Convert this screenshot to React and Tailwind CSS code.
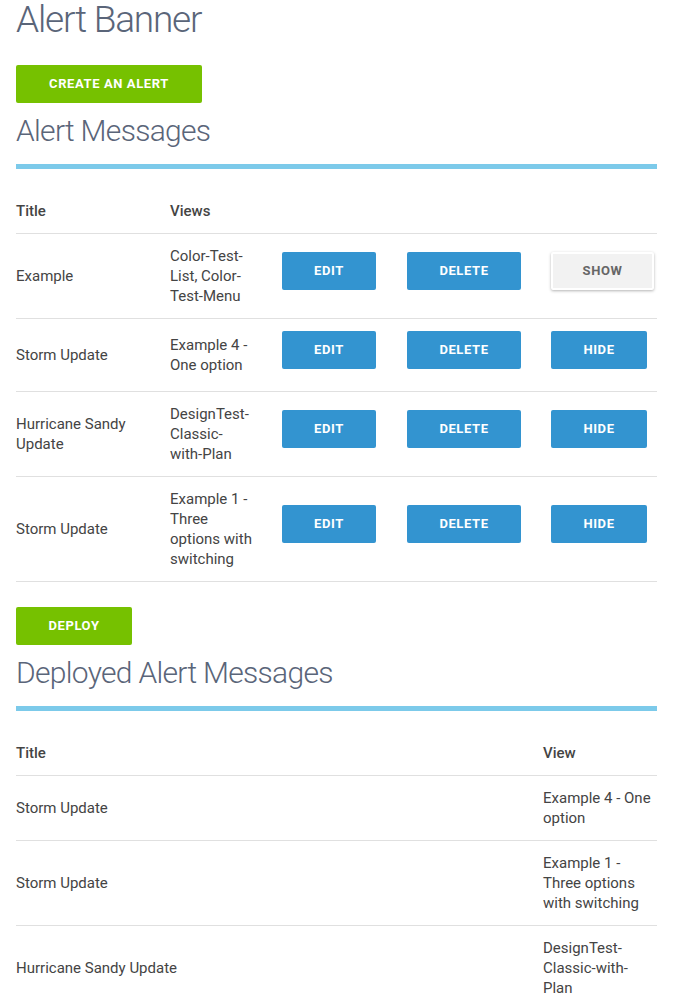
const alerts = [
  { title: 'Example', views: 'Color-Test-List, Color-Test-Menu', shown: false },
  { title: 'Storm Update', views: 'Example 4 - One option', shown: true },
  { title: 'Hurricane Sandy Update', views: 'DesignTest-Classic-with-Plan', shown: true },
  { title: 'Storm Update', views: 'Example 1 - Three options with switching', shown: true },
]

const deployed = [
  { title: 'Storm Update', view: 'Example 4 - One option' },
  { title: 'Storm Update', view: 'Example 1 - Three options with switching' },
  { title: 'Hurricane Sandy Update', view: 'DesignTest-Classic-with-Plan' },
]

const GreenButton = ({ children, className }) => (
  <button
    className={`h-[38px] rounded-[2px] bg-[#76c100] text-[13px] font-bold uppercase tracking-[0.6px] text-white ${className}`}
  >
    {children}
  </button>
)

const BlueButton = ({ children, className }) => (
  <button
    className={`mb-[10px] h-[38px] rounded-[2px] bg-[#3394d0] text-[13px] font-bold uppercase tracking-[0.6px] text-white ${className}`}
  >
    {children}
  </button>
)

const SectionTitle = ({ children }) => (
  <div>
    <h2 className="text-[30px] font-light leading-[36px] tracking-[-0.7px] text-[#5a6579]">{children}</h2>
    <div className="mt-[15px] h-[5px] bg-[#7ccaea]" />
  </div>
)

export default function App() {
  return (
    <div
      className="w-[673px] bg-white px-4 text-[15px] leading-5 text-[#444]"
      style={{ fontFamily: 'Roboto, "Liberation Sans", sans-serif' }}
    >
      <h1 className="text-[37px] font-light leading-10 tracking-[-1.2px] text-[#5a6579]">Alert Banner</h1>

      <GreenButton className="mt-[25px] w-[186px]">Create an alert</GreenButton>

      <div className="mt-[10px]">
        <SectionTitle>Alert Messages</SectionTitle>
      </div>

      {/* Alert messages table */}
      <div className="mt-5">
        <div className="grid h-[45px] grid-cols-[154px_1fr] items-center border-b border-[#e0e0e0] font-medium">
          <div>Title</div>
          <div>Views</div>
        </div>
        {alerts.map((a, i) => (
          <div
            key={i}
            className="grid grid-cols-[154px_112px_125px_144px_1fr] items-center border-b border-[#e0e0e0] py-3"
          >
            <div className="pr-3">{a.title}</div>
            <div className="w-[84px]">{a.views}</div>
            <div>
              <BlueButton className="w-[94px]">Edit</BlueButton>
            </div>
            <div>
              <BlueButton className="w-[114px]">Delete</BlueButton>
            </div>
            <div>
              {a.shown ? (
                <BlueButton className="w-[96px]">Hide</BlueButton>
              ) : (
                <button className="mb-[10px] h-[38px] w-[103px] rounded-[2px] border-2 border-white bg-[#f2f2f2] text-[13px] font-bold uppercase tracking-[0.6px] text-[#666] shadow-[0_1px_3px_rgba(0,0,0,0.3)]">
                  Show
                </button>
              )}
            </div>
          </div>
        ))}
      </div>

      <GreenButton className="mt-[25px] w-[116px]">Deploy</GreenButton>

      <div className="mt-[10px]">
        <SectionTitle>Deployed Alert Messages</SectionTitle>
      </div>

      {/* Deployed table */}
      <div className="mt-5">
        <div className="grid h-[45px] grid-cols-[527px_1fr] items-center border-b border-[#e0e0e0] font-medium">
          <div>Title</div>
          <div>View</div>
        </div>
        {deployed.map((d, i) => (
          <div
            key={i}
            className="grid grid-cols-[527px_1fr] items-center border-b border-[#e0e0e0] py-3 last:border-b-0"
          >
            <div>{d.title}</div>
            <div>{d.view}</div>
          </div>
        ))}
      </div>
    </div>
  )
}
